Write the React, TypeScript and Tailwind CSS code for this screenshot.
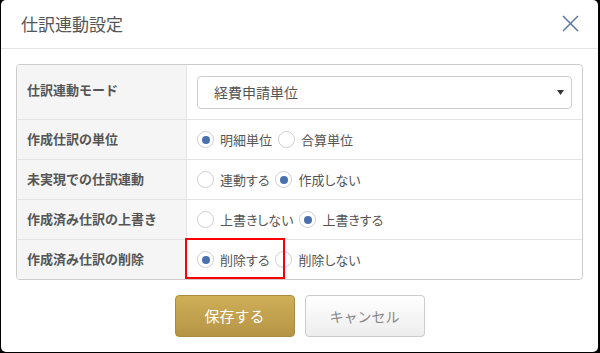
import React from "react";

const font = { fontFamily: '"Noto Sans CJK JP", "Noto Sans", sans-serif' };

function Radio({ checked, label }: { checked: boolean; label: string }) {
  return (
    <span className="flex items-center">
      <span className="w-[17px] h-[17px] rounded-full border border-[#cfcfcf] bg-white flex items-center justify-center shrink-0">
        {checked && <span className="w-[8px] h-[8px] rounded-full bg-[#4a70ad]" />}
      </span>
      <span className="ml-[6px] text-[13px] text-[#555] leading-none [font-feature-settings:'palt']">{label}</span>
    </span>
  );
}

function RadioRow({ options, checked }: { options: string[]; checked: number }) {
  return (
    <div className="flex items-center gap-[6px]">
      {options.map((o, i) => (
        <Radio key={o} label={o} checked={i === checked} />
      ))}
    </div>
  );
}

function Row({ label, children, first, last, tall }: { label: string; children: React.ReactNode; first?: boolean; last?: boolean; tall?: boolean }) {
  return (
    <div className={`grid grid-cols-[170px_1fr] ${last ? "" : "border-b border-[#e3e3e3]"}`}>
      <div className={`bg-[#f5f5f5] border-r border-[#e3e3e3] flex items-center pl-[10px] ${tall ? "h-[54px]" : "h-[39px]"}`}>
        <span className={`text-[13px] font-bold text-[#555] leading-none ${first ? "-mt-[5px]" : "-mt-[2px]"}`}>{label}</span>
      </div>
      <div className="flex items-center px-[10px]">{children}</div>
    </div>
  );
}

export default function App() {
  return (
    <div className="relative w-[600px] h-[353px] bg-black pl-px pr-[2px] pb-px" style={font}>
      <div className="bg-white rounded-[5px] h-full flex flex-col">
        <div className="h-[49px] border-b border-[#e5e5e5] flex items-center justify-between pl-[20px] pr-[19px]">
          <span className="text-[17px] text-[#555] leading-none -mt-[2px]">仕訳連動設定</span>
          <svg width="17" height="17" viewBox="0 0 17 17" className="-mt-[1px]">
            <line x1="1" y1="1" x2="16" y2="16" stroke="#5577a6" strokeWidth="1.5" />
            <line x1="16" y1="1" x2="1" y2="16" stroke="#5577a6" strokeWidth="1.5" />
          </svg>
        </div>
        <div className="px-[15px] pt-[15px]">
          <div className="border border-[#cccccc] rounded-[4px] overflow-hidden">
            <Row label="仕訳連動モード" first tall>
              <div className="w-full h-[33px] border border-[#cccccc] rounded-[4px] flex items-center justify-between pl-[16px] pr-[7px]">
                <span className="text-[14px] text-[#555] leading-none">経費申請単位</span>
                <svg width="7" height="5" viewBox="0 0 7 5">
                  <polygon points="0,0 7,0 3.5,5" fill="#333" />
                </svg>
              </div>
            </Row>
            <Row label="作成仕訳の単位">
              <RadioRow options={["明細単位", "合算単位"]} checked={0} />
            </Row>
            <Row label="未実現での仕訳連動">
              <RadioRow options={["連動する", "作成しない"]} checked={1} />
            </Row>
            <Row label="作成済み仕訳の上書き">
              <RadioRow options={["上書きしない", "上書きする"]} checked={1} />
            </Row>
            <Row label="作成済み仕訳の削除" last>
              <RadioRow options={["削除する", "削除しない"]} checked={0} />
            </Row>
          </div>
          <div className="flex justify-center gap-[10px] mt-[15px]">
            <button className="w-[120px] h-[42px] rounded-[4px] border border-[#a98b3f] bg-gradient-to-b from-[#d0af58] to-[#b59446] text-white text-[15px]">
              保存する
            </button>
            <button className="w-[120px] h-[42px] rounded-[4px] border border-[#cccccc] bg-gradient-to-b from-[#ffffff] to-[#ededed] text-[#888] text-[14px]">
              キャンセル
            </button>
          </div>
        </div>
      </div>
      <div className="absolute left-[185px] top-[238px] w-[100px] h-[41px] border-2 border-[#ff0000]" />
    </div>
  );
}
